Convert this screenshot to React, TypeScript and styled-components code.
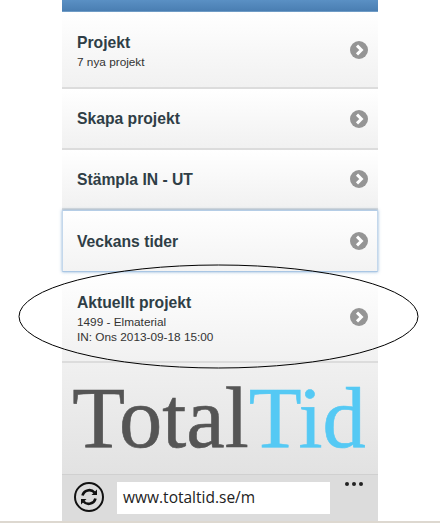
import React from "react";
import styled, { createGlobalStyle } from "styled-components";

const Global = createGlobalStyle`
  html, body { margin: 0; padding: 0; background: #fff; }
  body { font-family: "Liberation Sans", Arial, sans-serif; }
`;

const Page = styled.div`
  position: relative;
  width: 440px;
  height: 523px;
  overflow: hidden;
  display: flex;
  flex-direction: column;
  align-items: center;
  background: #fff;
`;

const Phone = styled.div`
  width: 316px;
  height: 521px;
  display: flex;
  flex-direction: column;
  flex: none;
`;

const Header = styled.header`
  height: 11px;
  flex: none;
  background: linear-gradient(#5a90c4, #4a7eb2);
  border-bottom: 1px solid #6f9cc6;
`;

const List = styled.nav`
  display: flex;
  flex-direction: column;
  flex: none;
`;

const Row = styled.a<{ $height: number; $focused?: boolean }>`
  box-sizing: border-box;
  height: ${(p) => p.$height}px;
  flex: none;
  display: flex;
  align-items: center;
  justify-content: space-between;
  padding: 0 10px 0 15px;
  background: linear-gradient(#fff, #f1f1f1);
  border-bottom: 2px solid #dcdcdc;
  ${(p) =>
    p.$focused &&
    `
    background: linear-gradient(#fff, #f3f3f3);
    border: 1px solid #c4d8ec;
    border-top-color: #b5cde6;
    border-bottom-color: #a9c6e4;
    padding: 0 9px 0 14px;
    box-shadow: 0 0 3px rgba(90, 144, 196, 0.7);
    position: relative;
  `}
`;

const RowText = styled.div`
  display: flex;
  flex-direction: column;
  padding-top: 4px;
  color: #2f3e46;
`;

const RowTitle = styled.div`
  font-size: 15.7px;
  line-height: 19px;
  font-weight: 700;
  color: #2f3e46;
`;

const RowSubs = styled.div`
  display: flex;
  flex-direction: column;
  margin-top: 3px;
`;

const RowSub = styled.div`
  font-size: 11.8px;
  line-height: 14.5px;
  color: #333;
`;

const ChevronIcon = styled.svg`
  width: 18px;
  height: 18px;
  flex: none;
`;

const Chevron = () => (
  <ChevronIcon viewBox="0 0 18 18">
    <circle cx="9" cy="9" r="9" fill="#959595" />
    <path d="M7 4.6 L11.4 9 L7 13.4" fill="none" stroke="#fff" strokeWidth="3" />
  </ChevronIcon>
);

const Footer = styled.footer`
  flex: 1;
  display: flex;
  flex-direction: column;
  background: linear-gradient(#f0f0f0, #dcdcdc);
`;

const LogoArea = styled.div`
  height: 112px;
  flex: none;
  box-sizing: border-box;
  display: flex;
  justify-content: center;
  border-bottom: 1px solid #d0d0d0;
`;

const Logo = styled.div`
  font-family: "Liberation Serif", "Times New Roman", serif;
  font-size: 86.5px;
  line-height: 110px;
  margin-left: -2px;
  color: #555;
  -webkit-text-stroke: 0.6px #555;
  white-space: nowrap;
`;

const LogoAccent = styled.span`
  color: #55c9f4;
  -webkit-text-stroke: 0.6px #55c9f4;
`;

const Toolbar = styled.div`
  flex: 1;
  display: flex;
  align-items: flex-start;
  padding: 7px 16px 0 12px;
  background: #dcdcdc;
`;

const RefreshIcon = styled.svg`
  width: 30px;
  height: 30px;
  flex: none;
`;

const Address = styled.div`
  width: 213px;
  height: 32px;
  flex: none;
  margin-left: 13px;
  box-sizing: border-box;
  padding-left: 6px;
  background: #fff;
  font-family: "Open Sans", sans-serif;
  font-size: 15.5px;
  line-height: 31px;
  color: #222;
`;

const Dots = styled.div`
  display: flex;
  gap: 3px;
  margin-left: 15px;
`;

const Dot = styled.span`
  width: 4px;
  height: 4px;
  border-radius: 50%;
  background: #222;
`;

const BottomLine = styled.div`
  width: 440px;
  height: 2px;
  flex: none;
  background: #ddd8d0;
`;

const Callout = styled.svg`
  position: absolute;
  left: 18px;
  top: 264px;
  width: 401px;
  height: 105px;
  pointer-events: none;
`;

export default function App() {
  return (
    <Page>
      <Global />
      <Phone>
        <Header />
        <List>
          <Row $height={77}>
            <RowText>
              <RowTitle>Projekt</RowTitle>
              <RowSubs>
                <RowSub>7 nya projekt</RowSub>
              </RowSubs>
            </RowText>
            <Chevron />
          </Row>
          <Row $height={61}>
            <RowTitle>Skapa projekt</RowTitle>
            <Chevron />
          </Row>
          <Row $height={60}>
            <RowTitle>Stämpla IN - UT</RowTitle>
            <Chevron />
          </Row>
          <Row $height={62} $focused>
            <RowTitle>Veckans tider</RowTitle>
            <Chevron />
          </Row>
          <Row $height={91}>
            <RowText>
              <RowTitle>Aktuellt projekt</RowTitle>
              <RowSubs>
                <RowSub>1499 - Elmaterial</RowSub>
                <RowSub>IN: Ons 2013-09-18 15:00</RowSub>
              </RowSubs>
            </RowText>
            <Chevron />
          </Row>
        </List>
        <Footer>
          <LogoArea>
            <Logo>
              Total<LogoAccent>Tid</LogoAccent>
            </Logo>
          </LogoArea>
          <Toolbar>
            <RefreshIcon viewBox="0 0 30 30">
              <circle cx="15" cy="15" r="14" fill="none" stroke="#111" strokeWidth="2" />
              <path d="M8.5 13.5 A7 7 0 0 1 20.5 10.5" fill="none" stroke="#111" strokeWidth="2.6" />
              <path d="M17.5 13 L23 13 L23 7.5 Z" fill="#111" />
              <path d="M21.5 16.5 A7 7 0 0 1 9.5 19.5" fill="none" stroke="#111" strokeWidth="2.6" />
              <path d="M12.5 17 L7 17 L7 22.5 Z" fill="#111" />
            </RefreshIcon>
            <Address>www.totaltid.se/m</Address>
            <Dots>
              <Dot />
              <Dot />
              <Dot />
            </Dots>
          </Toolbar>
        </Footer>
      </Phone>
      <BottomLine />
      <Callout viewBox="0 0 401 105">
        <ellipse cx="200.5" cy="52.5" rx="199.5" ry="51.5" fill="none" stroke="#000" strokeWidth="1" />
      </Callout>
    </Page>
  );
}
